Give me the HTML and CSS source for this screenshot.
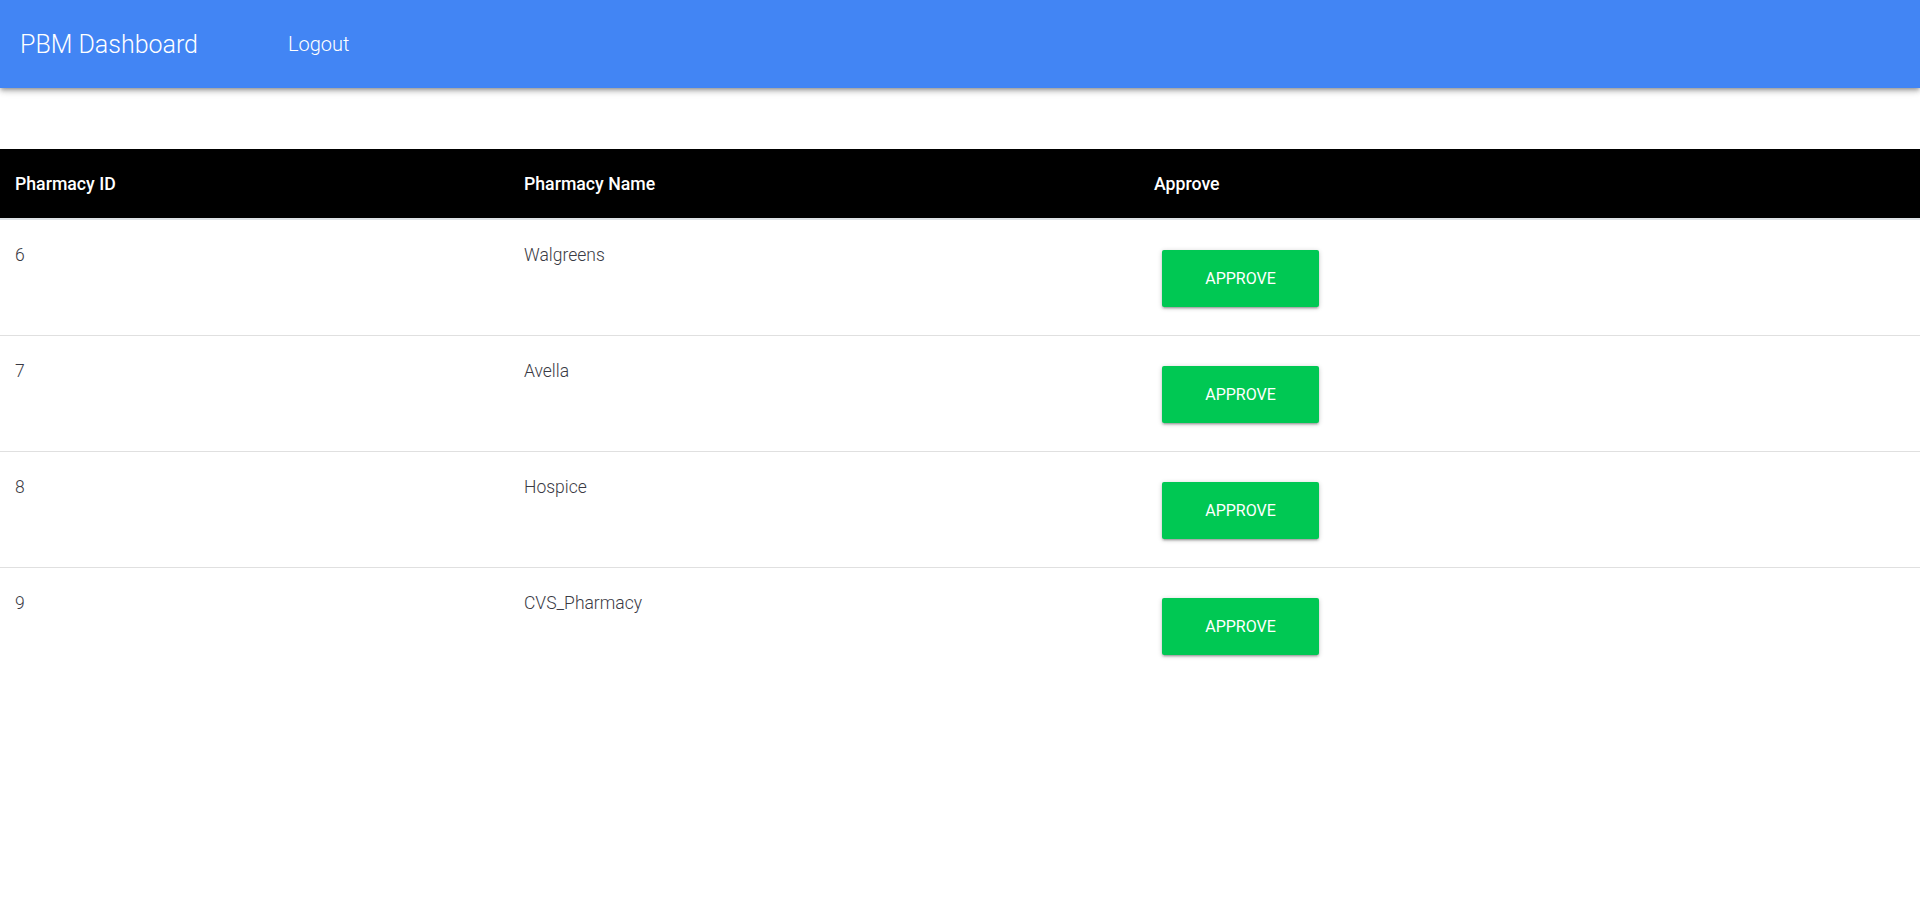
FILE: index.html
```html
<!DOCTYPE html>
<html lang="en">
<head>
<meta charset="utf-8">
<title>PBM Dashboard</title>
<link rel="stylesheet" href="styles.css">
</head>
<body>
<nav class="navbar">
  <a class="brand" href="#">PBM Dashboard</a>
  <a class="nav-link" href="#">Logout</a>
</nav>
<main class="content">
  <table class="pharm-table">
    <thead>
      <tr>
        <th class="col-id">Pharmacy ID</th>
        <th class="col-name">Pharmacy Name</th>
        <th class="col-approve">Approve</th>
      </tr>
    </thead>
    <tbody>
      <tr>
        <td>6</td>
        <td>Walgreens</td>
        <td><button class="btn-approve">APPROVE</button></td>
      </tr>
      <tr>
        <td>7</td>
        <td>Avella</td>
        <td><button class="btn-approve">APPROVE</button></td>
      </tr>
      <tr>
        <td>8</td>
        <td>Hospice</td>
        <td><button class="btn-approve">APPROVE</button></td>
      </tr>
      <tr>
        <td>9</td>
        <td>CVS_Pharmacy</td>
        <td><button class="btn-approve">APPROVE</button></td>
      </tr>
    </tbody>
  </table>
</main>
</body>
</html>
```
FILE: styles.css
```css
* { box-sizing: border-box; }
html, body {
  margin: 0;
  padding: 0;
  background: #fff;
  font-family: Roboto, "Liberation Sans", sans-serif;
}
.navbar {
  height: 88px;
  background: #4285f4;
  display: flex;
  align-items: center;
  padding-left: 20px;
  box-shadow: 0 4px 5px 0 rgba(0,0,0,0.14), 0 1px 10px 0 rgba(0,0,0,0.12), 0 2px 4px -1px rgba(0,0,0,0.3);
  position: relative;
  z-index: 2;
}
.brand {
  color: #fff;
  text-decoration: none;
  font-size: 25px;
  font-weight: 300;
  width: 268px;
}
.nav-link {
  color: #fff;
  text-decoration: none;
  font-size: 20px;
  font-weight: 300;
}
.content {
  padding-top: 61px;
}
.pharm-table {
  width: 100%;
  border-collapse: collapse;
}
.pharm-table thead th {
  background: #000;
  color: #fff;
  text-align: left;
  font-weight: 500;
  font-size: 17.7px;
  height: 70px;
  padding: 0 15px;
  vertical-align: middle;
  border-bottom: 2px solid #dee2e6;
}
.col-id { width: 509px; }
.col-name { width: 630px; }
.pharm-table tbody td {
  padding: 23px 15px 22px;
  vertical-align: top;
  font-size: 17.5px;
  line-height: 24px;
  font-weight: 300;
  color: #3a3a44;
  border-bottom: 1px solid #e0e0e0;
}
.pharm-table tbody tr:last-child td {
  border-bottom: none;
}
.btn-approve {
  display: block;
  margin: 7px 0 6px 8px;
  width: 157px;
  height: 57px;
  border: none;
  border-radius: 2px;
  background: #00c853;
  color: #fff;
  font-family: Roboto, "Liberation Sans", sans-serif;
  font-size: 16px;
  font-weight: 400;
  cursor: pointer;
  box-shadow: 0 2px 2px 0 rgba(0,0,0,0.14), 0 3px 1px -2px rgba(0,0,0,0.12), 0 1px 5px 0 rgba(0,0,0,0.2);
}
```
